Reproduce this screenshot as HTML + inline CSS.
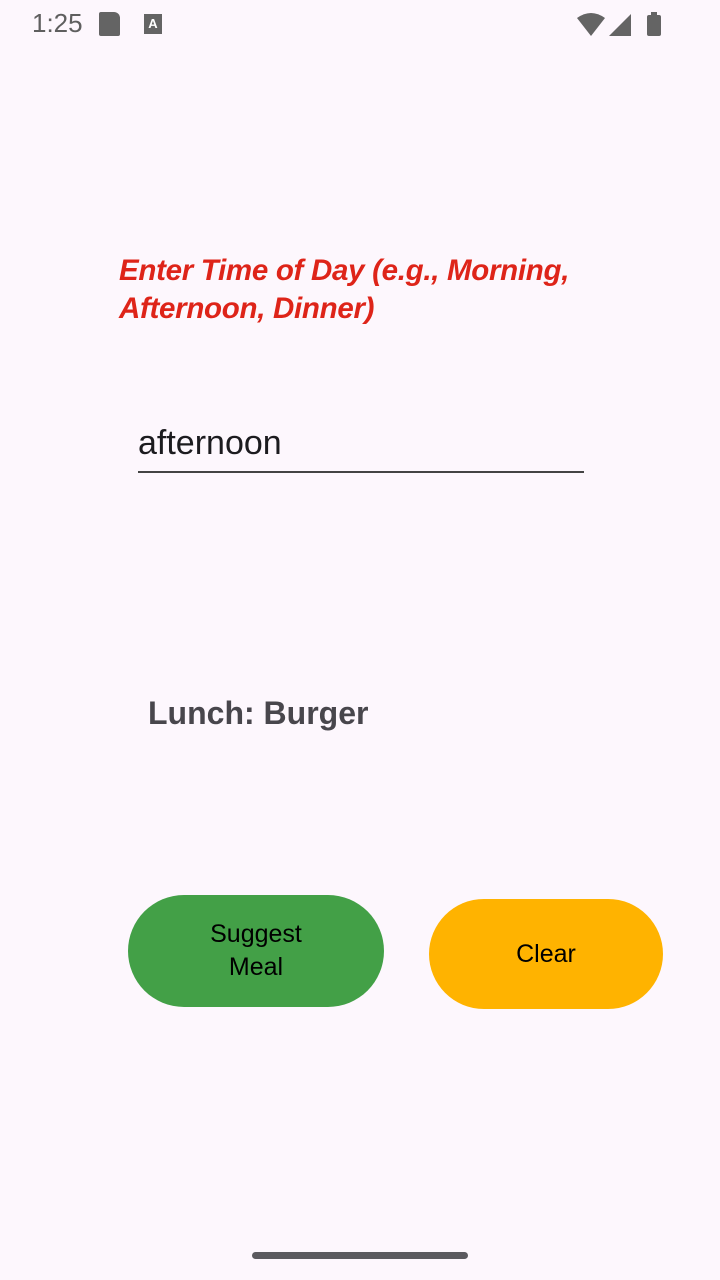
<!DOCTYPE html>
<html><head><style>
body{margin:0;width:720px;height:1280px;background:#fdf7fd;position:relative;font-family:"Liberation Sans",Roboto,sans-serif;overflow:hidden}
.a{position:absolute}
</style></head><body>
<div class="a" style="left:32px;top:8px;font-size:26px;color:#5f5f5f">1:25</div>
<div class="a" style="left:99px;top:12px;width:21px;height:24px;background:#646464;border-radius:2px 6px 2px 2px"></div>
<div class="a" style="left:144px;top:14px;width:18px;height:20px;background:#646464;color:#fff;font-size:13px;font-weight:bold;text-align:center;line-height:20px">A</div>
<svg class="a" style="left:575px;top:12px" width="95" height="26"><path d="M2 6 Q16 -4 30 6 L16 24Z" fill="#646464"/><path d="M34 24 L56 2 L56 24Z" fill="#646464"/><rect x="72" y="3" width="14" height="21" rx="2" fill="#646464"/><rect x="76" y="0" width="6" height="4" fill="#646464"/></svg>
<div class="a" style="left:119px;top:252px;width:560px;font-size:29.5px;line-height:38px;font-weight:bold;font-style:italic;color:#de2419;letter-spacing:-0.3px">Enter Time of Day (e.g., Morning,<br>Afternoon, Dinner)</div>
<div class="a" style="left:138px;top:424px;font-size:34px;color:#1c1b1f">afternoon</div>
<div class="a" style="left:138px;top:471px;width:446px;height:2px;background:#444"></div>
<div class="a" style="left:148px;top:695px;font-size:32px;font-weight:bold;color:#48464c">Lunch: Burger</div>
<div class="a" style="left:128px;top:895px;width:256px;height:112px;border-radius:56px;background:#43a047;display:flex;align-items:center;justify-content:center;text-align:center;font-size:25px;line-height:33px;color:#000">Suggest<br>Meal</div>
<div class="a" style="left:429px;top:899px;width:234px;height:110px;border-radius:55px;background:#ffb300;display:flex;align-items:center;justify-content:center;font-size:25px;color:#000">Clear</div>
<div class="a" style="left:252px;top:1252px;width:216px;height:7px;border-radius:4px;background:#5b5a5f"></div>
</body></html>
